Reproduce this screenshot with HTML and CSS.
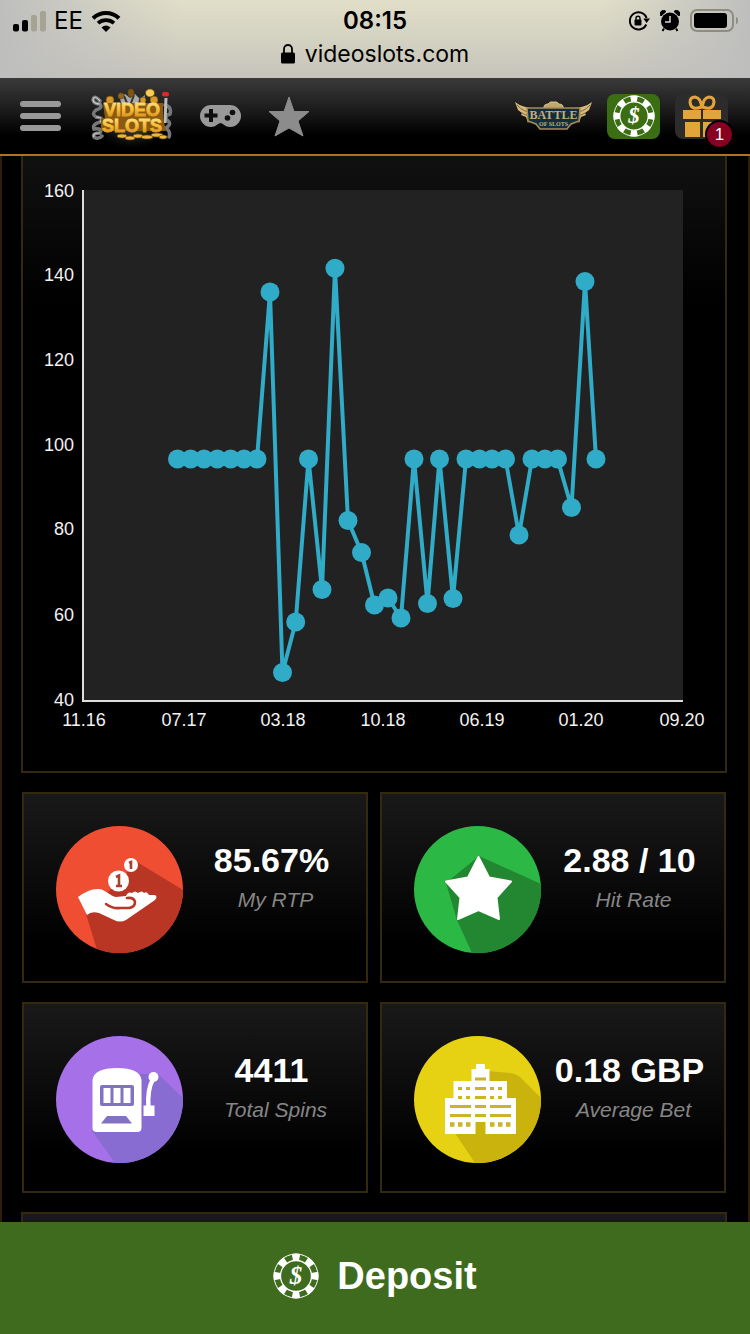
FILE: index.html
```html
<!DOCTYPE html>
<html lang="en">
<head>
<meta charset="utf-8">
<meta name="viewport" content="width=device-width, initial-scale=1">
<title>Videoslots</title>
<link rel="stylesheet" href="styles.css">
</head>
<body>
<div class="status">
  <div class="status-row">
    <div class="status-left">
      <svg width="34" height="22" viewBox="0 0 34 22" aria-hidden="true">
        <rect x="1" y="14" width="6" height="7.500" rx="2"/>
        <rect x="10" y="10" width="6" height="11.500" rx="2"/>
        <rect x="19" y="5" width="6" height="16.500" rx="2" fill="#a5a493"/>
        <rect x="28" y="1" width="6" height="20.500" rx="2" fill="#a5a493"/>
      </svg>
      <span class="carrier">EE</span>
      <svg width="30" height="22" viewBox="0 0 30 22" aria-hidden="true">
        <path d="M2 8.200C9.500 1.300 20.500 1.300 28 8.200" fill="none" stroke="#000" stroke-width="4"/>
        <path d="M7 13.200C11.500 9.200 18.500 9.200 23 13.200" fill="none" stroke="#000" stroke-width="3.800"/>
        <path d="M15 22L10.500 17.400Q15 13.600 19.500 17.400Z"/>
      </svg>
    </div>
    <span class="clock">08:15</span>
    <div class="status-right">
      <svg width="22" height="22" viewBox="0 0 22 22" aria-hidden="true">
        <path d="M18.300 14.500A8.600 8.600 0 1 1 18.600 8" fill="none" stroke="#000" stroke-width="1.900"/>
        <path d="M15.300 8.500H22L18.600 13Z"/>
        <rect x="6.500" y="9.500" width="7" height="6" rx="1"/>
        <path d="M8 10V8.200a2 2 0 0 1 4 0V10" fill="none" stroke="#000" stroke-width="1.400"/>
      </svg>
      <svg width="20" height="22" viewBox="0 0 20 22" aria-hidden="true">
        <circle cx="10" cy="11.500" r="9"/>
        <path d="M1 6A3 3 0 0 1 6 1.500ZM19 6A3 3 0 0 0 14 1.500Z" stroke="#000"/>
        <path d="M4 18.500L2.500 21M16 18.500L17.500 21" stroke="#000" stroke-width="2"/>
        <path d="M10 6V12H5" fill="none" stroke="#d9d8c8" stroke-width="1.500"/>
      </svg>
      <svg width="48" height="24" viewBox="0 0 48 24" aria-hidden="true">
        <rect x="1" y="1" width="42" height="21" rx="6" fill="none" stroke="#8e8d80" stroke-width="2"/>
        <rect x="4" y="4" width="33" height="15" rx="3"/>
        <path d="M46 8Q48 8 48 11.500Q48 15 46 15Z" fill="#8e8d80"/>
      </svg>
    </div>
  </div>
  <div class="address">
    <svg width="14" height="20" viewBox="0 0 14 20" aria-hidden="true">
      <rect x="0" y="8.500" width="14" height="11" rx="1.500"/>
      <path d="M3 9V5a4 4 0 0 1 8 0V9" fill="none" stroke="#000" stroke-width="1.800"/>
    </svg>
    <span>videoslots.com</span>
  </div>
</div>

<nav class="topbar">
  <button class="nav-item menu" aria-label="Menu">
    <svg width="41" height="32" viewBox="0 0 41 32" fill="#999"><rect y="1" width="41" height="6" rx="3"/><rect y="13" width="41" height="6" rx="3"/><rect y="25" width="41" height="6" rx="3"/></svg>
  </button>
  <a class="nav-item logo" href="#" aria-label="Videoslots">
    <svg width="82" height="62" viewBox="0 0 82 62">
      <defs>
        <linearGradient id="gold" x1="0" y1="0" x2="0" y2="1"><stop offset="0" stop-color="#ffeb94"/><stop offset=".5" stop-color="#f6bb35"/><stop offset="1" stop-color="#cf8412"/></linearGradient>
        <radialGradient id="glow"><stop offset="0" stop-color="#77755c"/><stop offset="1" stop-color="#222" stop-opacity="0"/></radialGradient>
      </defs>
      <ellipse cx="41" cy="36" rx="38" ry="28" fill="url(#glow)"/>
      <g fill="none" stroke="#77787a" stroke-width="3.500" stroke-linecap="round">
        <path d="M9 16Q3 9 2 15Q3 19 9 19Q12 23 5 25Q0 29 5 32Q14 33 9 37Q1 39 3 44Q12 43 9 48Q1 48 3 52Q7 55 11 51"/>
        <path d="M74 20Q81 22 79 29Q72 31 77 36Q81 39 75 43Q80 47 78 52"/>
      </g>
      <path d="M9 16Q3 9 2 15Q3 19 9 19M5 32Q14 33 9 37M9 48Q1 48 3 52" fill="none" stroke="#c8c9cc" stroke-width="1.200"/>
      <path d="M29 14L34 9L39 13L44 9L49 14L54 10L53 19L31 20Z" fill="#a9aaac"/>
      <path d="M33 11L36 18M43 10L40 18M50 12L48 18" stroke="#333" stroke-width="2"/>
      <g fill="#d79a26" stroke="#6d4709" stroke-width=".7">
        <ellipse cx="59" cy="8" rx="4.500" ry="4" fill="#f7cd55"/><ellipse cx="40" cy="8" rx="3" ry="4" fill="#805617"/>
        <circle cx="19" cy="15" r="4"/><circle cx="63" cy="15" r="4"/><circle cx="30" cy="11" r="3" fill="#8d6824"/><circle cx="52" cy="15" r="3"/>
      </g>
      <path d="M75 13L74 38" stroke="#bbb" stroke-width="3"/><rect x="71" y="7" width="7" height="4.500" rx="2" fill="#e02626"/>
      <path d="M12 18H72V33L75 46H10V33H14Z" fill="#8a5a10"/>
      <g fill="url(#gold)" stroke="url(#gold)" stroke-width=".8" class="logo-word">
        <text x="13" y="31">VIDEO</text><text x="11" y="47">SLOTS</text>
      </g>
      <g fill="#edb73e" stroke="#6d4709" stroke-width=".7">
        <ellipse cx="31" cy="51" rx="5" ry="2"/><ellipse cx="39" cy="53" rx="5" ry="2"/><ellipse cx="47" cy="51" rx="5" ry="2"/><ellipse cx="56" cy="52" rx="6" ry="2"/><ellipse cx="66" cy="50" rx="6" ry="2"/><ellipse cx="72" cy="52" rx="4" ry="2"/>
      </g>
    </svg>
  </a>
  <button class="nav-item games" aria-label="Games">
    <svg width="41" height="24" viewBox="0 0 41 24">
      <path d="M11 1H30A10.500 10.500 0 0 1 30 23C25 23 23 19 20.500 19S16 23 11 23A10.500 10.500 0 0 1 11 1Z" fill="#999"/>
      <path d="M11 5V18M4.500 11.500H17.500" stroke="#0f0f0f" stroke-width="4"/>
      <circle cx="32.500" cy="8.500" r="2.800" fill="#0f0f0f"/><circle cx="27.500" cy="14" r="2.800" fill="#0f0f0f"/>
    </svg>
  </button>
  <button class="nav-item favourites" aria-label="Favourites">
    <svg width="42" height="41" viewBox="0 0 42 41"><path d="M21 1L26 15.500L41 15.500L30 25L35 40L21 32L7 40L12 25L1 15.500L16 15.500Z" fill="#8c8c8c" stroke="#8c8c8c" stroke-linejoin="round"/></svg>
  </button>
  <a class="nav-item battle" href="#" aria-label="Battle of Slots">
    <svg width="77" height="30" viewBox="0 0 77 30">
      <path d="M29 8Q28 3 33 3Q35 0 38.500 1Q42 0 44 3Q49 3 48 8Z" fill="#c3a768" stroke="#e8d49a" stroke-width=".8"/>
      <path d="M0 1Q9 8 23 7L13 22L11 16L6 14L7 12L3 9Z" fill="#d6bb7c"/>
      <path d="M77 1Q68 8 54 7L64 22L66 16L71 14L70 12L74 9Z" fill="#d6bb7c"/>
      <path d="M2 4Q9 12 18 11M7 12Q11 15 15 14M75 4Q68 12 59 11M70 12Q66 15 62 14" fill="none" stroke="#826639"/>
      <path d="M12 7L65 7L64 20L56 23L52 28H25L21 23L13 20Z" fill="#102e40" stroke="#a98b53" stroke-width="1.600"/>
      <text class="battle-word" x="38.500" y="18">BATTLE</text>
      <text class="battle-small" x="38.500" y="25">OF SLOTS</text>
    </svg>
  </a>
  <button class="nav-item tile tile-green" aria-label="Deposit money">
    <svg width="42" height="42" viewBox="0 0 46 46">
      <g fill="none" stroke="#fff">
        <circle cx="23" cy="23" r="22" stroke-width="1"/>
        <circle cx="23" cy="23" r="15.500" stroke-width="1.300"/>
        <circle cx="23" cy="23" r="19" stroke-width="7" pathLength="16" stroke-dasharray="1 1" stroke-dashoffset="0.500"/>
      </g>
      <text x="23" y="31" class="chip-sign">$</text>
    </svg>
  </button>
  <button class="nav-item tile tile-dark" aria-label="Rewards, 1 new">
    <svg width="40" height="44" viewBox="0 0 40 44">
      <g fill="#e3a43a"><rect x="1" y="16" width="18" height="9"/><rect x="21" y="16" width="18" height="9"/><rect x="3" y="28" width="15" height="15"/><rect x="21" y="28" width="15" height="15"/></g>
      <g fill="none" stroke="#e3a43a" stroke-width="3"><path d="M19.500 13Q9 17 8 8Q8 3 13 3Q19 4 19.500 13Z"/><path d="M20.500 13Q31 17 32 8Q32 3 27 3Q21 4 20.500 13Z"/></g>
    </svg>
    <span class="badge">1</span>
  </button>
</nav>

<main class="content">
  <section class="panel chart" aria-label="RTP history">
    <svg viewBox="23 156 702 615" role="img" aria-label="RTP by month">
      <defs><marker id="dot" markerUnits="userSpaceOnUse" markerWidth="20" markerHeight="20" refX="10" refY="10"><circle cx="10" cy="10" r="9.500" fill="#30abc8"/></marker></defs>
      <rect x="83" y="190" width="600" height="511" fill="#222"/>
      <path d="M83 190V701H683" fill="none" stroke="#ddd" stroke-width="2"/>
      <g class="axis axis-y">
        <text x="74" y="197">160</text><text x="74" y="281">140</text><text x="74" y="366">120</text><text x="74" y="451">100</text><text x="74" y="535">80</text><text x="74" y="621">60</text><text x="74" y="706">40</text>
      </g>
      <g class="axis axis-x">
        <text x="84" y="726">11.16</text><text x="184" y="726">07.17</text><text x="283" y="726">03.18</text><text x="383" y="726">10.18</text><text x="482" y="726">06.19</text><text x="581" y="726">01.20</text><text x="682" y="726">09.20</text>
      </g>
      <polyline class="series" points="177.500,459 190.700,459 204,459 217.300,459 230.700,459 244,459 257,459 270,292 282.500,672.500 295.700,622 308.500,459 322,589.500 335,268.300 348,520.500 361.500,552.500 374.500,605 388,598 401,618 414,459 427.500,603.500 439.500,459 453,598.500 466,459 479.500,459 492,459 505.500,459 519,535 532,459 545,459 557.500,459 571.500,507.500 585,281.500 596,459"/>
    </svg>
  </section>

  <div class="stats">
    <section class="panel stat">
      <svg class="stat-icon" viewBox="0 0 127 127" aria-hidden="true">
        <clipPath id="round"><circle cx="63.500" cy="63.500" r="63.500"/></clipPath>
        <g clip-path="url(#round)">
          <rect width="127" height="127" fill="#ef4e33"/>
          <path d="M81 36L127 64V127H42L30 88L58 60Z" fill="#b93524"/>
        </g>
        <path d="M22 71Q34 62 43 63C50 64 54 70 60 71L70 70Q72 65 76 67Q79 64 82 67Q86 64 88 67Q91 65 93 69L99 69Q102 71 99 74L70 94Q64 97 58 94L43 87Q35 85 31 89Z" fill="#fff"/>
        <path d="M50 78Q57 83 64 82H73Q79 81 79 76Q78 71 71 72" fill="none" stroke="#b93524" stroke-width="2.600" stroke-linecap="round"/>
        <circle cx="62.500" cy="55" r="10.500" fill="#fff"/><path d="M60 51L63 49.500V60M60 60H66" fill="none" stroke="#a8402f" stroke-width="2.600"/>
        <circle cx="75" cy="39" r="7" fill="#fff"/><path d="M73 37L75 36V43" fill="none" stroke="#a8402f" stroke-width="2.600"/>
      </svg>
      <div class="stat-text"><strong class="value">85.67%</strong><span class="label">My RTP</span></div>
    </section>
    <section class="panel stat">
      <svg class="stat-icon" viewBox="0 0 127 127" aria-hidden="true">
        <g clip-path="url(#round)">
          <rect width="127" height="127" fill="#2bb845"/>
          <path d="M65 30L127 58V127H58L43 94L32 57Z" fill="#238732"/>
        </g>
        <path d="M64.500 31L75 51.500L97 55.500L82.500 71.500L85 93L64.500 84L44 93L46.500 71.500L32 55.500L54 51.500Z" fill="#fff" stroke="#fff" stroke-width="2" stroke-linejoin="round"/>
      </svg>
      <div class="stat-text"><strong class="value">2.88 / 10</strong><span class="label">Hit Rate</span></div>
    </section>
    <section class="panel stat">
      <svg class="stat-icon" viewBox="0 0 127 127" aria-hidden="true">
        <g clip-path="url(#round)">
          <rect width="127" height="127" fill="#a670e8"/>
          <path d="M82 38H102L127 62V127H59L36 95Z" fill="#886cd2"/>
        </g>
        <path d="M36.500 44Q38 32 61 32Q84 32 85.500 44V92Q85.500 96 81 96H41Q36.500 96 36.500 92Z" fill="#fff"/>
        <rect x="44" y="49" width="34" height="21" rx="2" fill="#8272c4"/>
        <g fill="#fff"><rect x="47.500" y="52" width="7" height="15"/><rect x="57.500" y="52" width="7" height="15"/><rect x="67.500" y="52" width="7" height="15"/></g>
        <path d="M51 80H70L76 87.500H45Z" fill="#8272c4"/>
        <circle cx="97.500" cy="41" r="5" fill="#fff"/><path d="M97 43Q91 54 92.500 72" fill="none" stroke="#fff" stroke-width="4.500"/><rect x="87.500" y="69.500" width="11" height="10.500" fill="#fff"/>
      </svg>
      <div class="stat-text"><strong class="value">4411</strong><span class="label">Total Spins</span></div>
    </section>
    <section class="panel stat">
      <svg class="stat-icon" viewBox="0 0 127 127" aria-hidden="true">
        <g clip-path="url(#round)">
          <rect width="127" height="127" fill="#e6d112"/>
          <path d="M74 35L96 37Q103 38 107 42L127 62V127H61L41 97Z" fill="#c9b30c"/>
        </g>
        <path d="M62 28H71V33H75.500V45H93V62H102V98H71.500V86H61.500V98H31V62H39.500V45H57.500V33H62Z" fill="#fff"/>
        <g fill="none" stroke="#c9b42a" stroke-width="3">
          <path d="M61 43H72M61 52.500H72M61 61.500H72M61 70.500H72M61 79.500H72M36 70.500H57M36 79.500H57M76 70.500H97M76 79.500H97"/>
          <path d="M44 52.500H48M52 52.500H56M76 52.500H80M84 52.500H88M44 61.500H48M52 61.500H56M76 61.500H80M84 61.500H88"/>
          <path d="M36 88.500H40.500M44 88.500H48.500M52 88.500H56.500M76 88.500H80.500M84 88.500H88.500M92 88.500H96.500" stroke-width="4.500"/>
        </g>
      </svg>
      <div class="stat-text"><strong class="value">0.18 GBP</strong><span class="label">Average Bet</span></div>
    </section>
  </div>
  <section class="panel next"></section>
</main>

<button class="deposit">
  <svg width="46" height="46" viewBox="0 0 46 46" aria-hidden="true">
    <g fill="none" stroke="#fff">
      <circle cx="23" cy="23" r="22" stroke-width="1"/>
      <circle cx="23" cy="23" r="15.500" stroke-width="1.300"/>
      <circle cx="23" cy="23" r="19" stroke-width="7" pathLength="16" stroke-dasharray="1 1" stroke-dashoffset="0.500"/>
    </g>
    <text x="23" y="31" class="chip-sign">$</text>
  </svg>
  <span>Deposit</span>
</button>
</body>
</html>
```

FILE: styles.css
```css
* { box-sizing: border-box; }

body {
  margin: 0;
  height: 100vh;
  display: flex;
  flex-direction: column;
  overflow: hidden;
  background: #000;
  color: #fff;
  font-family: "Liberation Sans", Arial, sans-serif;
}

svg { display: block; flex: none; }
button { border: 0; padding: 0; background: none; color: inherit; font: inherit; cursor: pointer; }

/* Phone status area */
.status {
  flex: none;
  height: 78px;
  padding: 8px 12px 0;
  color: #000;
  font-family: Inter, "Liberation Sans", sans-serif;
  font-size: 24px;
  line-height: 26px;
  background:
    linear-gradient(90deg, #bebebe, #bebebe00 24%, #bebebe00 80%, #bebebe),
    linear-gradient(#e1dfc8, #c6c4bb);
}
.status-row { display: grid; grid-template-columns: 1fr auto 1fr; align-items: center; }
.status-left { display: flex; align-items: center; gap: 8px; }
.status-right { display: flex; align-items: center; justify-content: flex-end; gap: 10px; }
.clock { font-weight: 600; }
.address { display: flex; justify-content: center; align-items: center; gap: 10px; margin-top: 7px; font-size: 23px; }

/* Site navigation */
.topbar {
  flex: none;
  height: 78px;
  display: flex;
  align-items: center;
  gap: 15px;
  padding: 0 22px 0 20px;
  border-bottom: 2px solid #a87528;
  background: linear-gradient(#3a3a3a, #1d1d1d 40%, #000 75%);
}
.nav-item { flex: none; }
.logo { margin-left: 15px; }
.games, .favourites { margin-left: 12px; }
.battle { margin-left: auto; }
.logo-word { font: bold 18px "Liberation Sans", sans-serif; }
.battle-word, .battle-small { fill: #c8ad72; text-anchor: middle; font-family: "Liberation Serif", serif; font-weight: bold; }
.battle-word { font-size: 12px; }
.battle-small { font-size: 6px; }
.chip-sign { fill: #fff; font: italic bold 25px "Liberation Serif", serif; text-anchor: middle; }
.tile { position: relative; width: 53px; height: 45px; display: flex; align-items: center; justify-content: center; border-radius: 8px; }
.tile-green { background: #3b6e12; }
.tile-dark { background: #2c2c2c; }
.badge {
  position: absolute;
  right: -6px;
  bottom: -10px;
  width: 29px;
  height: 29px;
  border: 2px solid #000;
  border-radius: 50%;
  background: #870021;
  font-size: 17px;
  line-height: 25px;
  text-align: center;
}

/* Statistics */
.content {
  flex: 1;
  min-height: 0;
  overflow: hidden;
  padding: 0 21px 0 19px;
  border: solid #2e1e03;
  border-width: 0 2px;
}
.panel { border: 2px solid #33290f; background: linear-gradient(#191919, #000 80%); }
.chart { border-top: 0; background: linear-gradient(#111, #000 24%); }
.chart svg { width: 100%; height: auto; }
.axis { fill: #f2f2f2; font-size: 18px; }
.axis-y { text-anchor: end; }
.axis-x { text-anchor: middle; }
.series { fill: none; stroke: #30abc8; stroke-width: 4; marker: url(#dot); }

.stats { display: grid; grid-template-columns: 1fr 1fr; gap: 19px 12px; margin: 19px 1px; }
.stat { display: flex; padding: 32px 6px 28px 32px; }
.stat-icon { width: 127px; height: 127px; }
.stat-text { flex: 1; min-width: 0; padding-top: 14px; text-align: center; }
.value { display: block; font-size: 34px; line-height: 40px; white-space: nowrap; }
.label { display: block; margin-top: 8px; padding-left: 8px; color: #868686; font-size: 21px; font-style: italic; line-height: 24px; }
.next { height: 191px; }

.deposit {
  flex: none;
  width: 100%;
  height: 112px;
  display: flex;
  align-items: center;
  justify-content: center;
  gap: 18px;
  padding-bottom: 4px;
  background: #3e6b1e;
  font-size: 38px;
  font-weight: bold;
}
```
